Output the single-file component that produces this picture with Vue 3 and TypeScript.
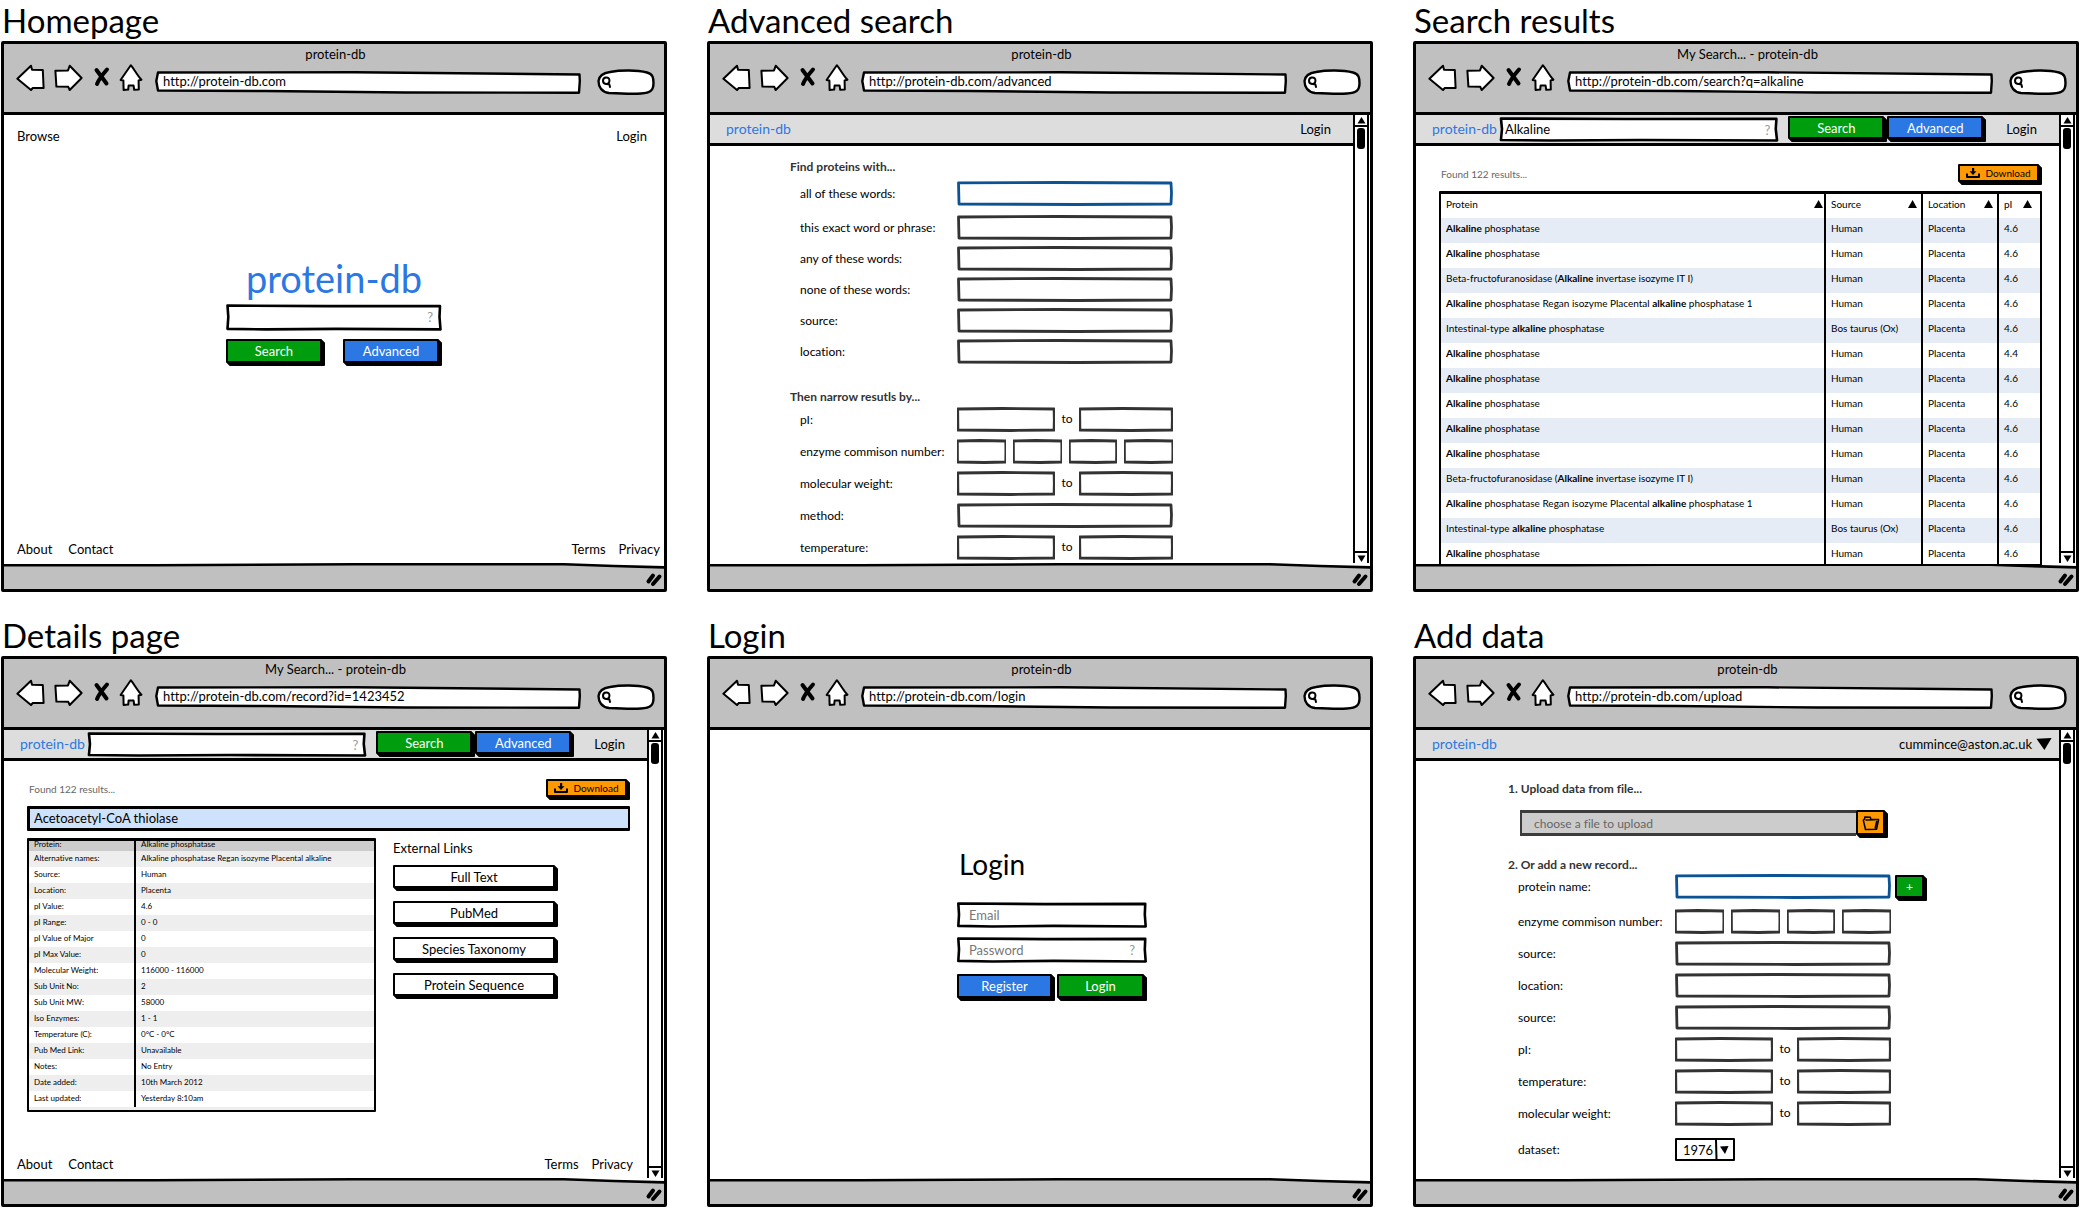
<script setup lang="ts">
type Kind = 'home' | 'advanced' | 'results' | 'details' | 'login' | 'upload'
type FieldKind = 'full' | 'range' | 'quad' | 'select'

interface Screen {
  kind: Kind
  heading: string
  title: string
  url: string
}

interface Field {
  label: string
  kind: FieldKind
  focus?: boolean
  add?: boolean
}

interface TextPart {
  text: string
  bold?: boolean
}

interface Result {
  name: TextPart[]
  source: string
  pi: string
}

const screens: Screen[] = [
  { kind: 'home', heading: 'Homepage', title: 'protein-db', url: 'http://protein-db.com' },
  { kind: 'advanced', heading: 'Advanced search', title: 'protein-db', url: 'http://protein-db.com/advanced' },
  { kind: 'results', heading: 'Search results', title: 'My Search... - protein-db', url: 'http://protein-db.com/search?q=alkaline' },
  { kind: 'details', heading: 'Details page', title: 'My Search... - protein-db', url: 'http://protein-db.com/record?id=1423452' },
  { kind: 'login', heading: 'Login', title: 'protein-db', url: 'http://protein-db.com/login' },
  { kind: 'upload', heading: 'Add data', title: 'protein-db', url: 'http://protein-db.com/upload' },
]

const full = (label: string, extra: Partial<Field> = {}): Field => ({ label, kind: 'full', ...extra })
const range = (label: string): Field => ({ label, kind: 'range' })

const wordFields: Field[] = [
  full('all of these words:', { focus: true }),
  full('this exact word or phrase:'),
  full('any of these words:'),
  full('none of these words:'),
  full('source:'),
  full('location:'),
]

const narrowFields: Field[] = [
  range('pI:'),
  { label: 'enzyme commison number:', kind: 'quad' },
  range('molecular weight:'),
  full('method:'),
  range('temperature:'),
]

const recordFields: Field[] = [
  full('protein name:', { focus: true, add: true }),
  { label: 'enzyme commison number:', kind: 'quad' },
  full('source:'),
  full('location:'),
  full('source:'),
  range('pI:'),
  range('temperature:'),
  range('molecular weight:'),
  { label: 'dataset:', kind: 'select' },
]

const groups: Record<'advanced' | 'upload', { id: string; title: string; fields: Field[] }[]> = {
  advanced: [
    { id: 'words', title: 'Find proteins with...', fields: wordFields },
    { id: 'narrow', title: 'Then narrow resutls by...', fields: narrowFields },
  ],
  upload: [{ id: 'new-record', title: '2. Or add a new record...', fields: recordFields }],
}

const plain: TextPart[] = [{ text: 'Alkaline', bold: true }, { text: ' phosphatase' }]
const beta: TextPart[] = [
  { text: 'Beta-fructofuranosidase (' },
  { text: 'Alkaline', bold: true },
  { text: ' invertase isozyme IT I)' },
]
const regan: TextPart[] = [
  { text: 'Alkaline', bold: true },
  { text: ' phosphatase Regan isozyme Placental ' },
  { text: 'alkaline', bold: true },
  { text: ' phosphatase 1' },
]
const intestinal: TextPart[] = [
  { text: 'Intestinal-type ' },
  { text: 'alkaline', bold: true },
  { text: ' phosphatase' },
]
const human = (name: TextPart[], pi = '4.6'): Result => ({ name, source: 'Human', pi })
const ox: Result = { name: intestinal, source: 'Bos taurus (Ox)', pi: '4.6' }

const results: Result[] = [
  human(plain), human(plain), human(beta), human(regan), ox,
  human(plain, '4.4'), human(plain), human(plain), human(plain), human(plain),
  human(beta), human(regan), ox, human(plain),
]

const columns = ['Protein', 'Source', 'Location', 'pI']

const record: [string, string][] = [
  ['Protein:', 'Alkaline phosphatase'],
  ['Alternative names:', 'Alkaline phosphatase Regan isozyme Placental alkaline'],
  ['Source:', 'Human'],
  ['Location:', 'Placenta'],
  ['pI Value:', '4.6'],
  ['pI Range:', '0 - 0'],
  ['pI Value of Major', '0'],
  ['pI Max Value:', '0'],
  ['Molecular Weight:', '116000 - 116000'],
  ['Sub Unit No:', '2'],
  ['Sub Unit MW:', '58000'],
  ['Iso Enzymes:', '1 - 1'],
  ['Temperature (C):', '0°C - 0°C'],
  ['Pub Med Link:', 'Unavailable'],
  ['Notes:', 'No Entry'],
  ['Date added:', '10th March 2012'],
  ['Last updated:', 'Yesterday 8:10am'],
]

const externalLinks = ['Full Text', 'PubMed', 'Species Taxonomy', 'Protein Sequence']

const hasBar = (k: Kind) => k !== 'home' && k !== 'login'
const hasSearch = (k: Kind) => k === 'results' || k === 'details'
const formGroups = (k: Kind) => (k === 'advanced' || k === 'upload' ? groups[k] : [])
</script>

<template>
  <main class="board">
    <section v-for="s in screens" :key="s.kind" class="screen">
      <h2 class="heading">{{ s.heading }}</h2>
      <div class="window">
        <header class="chrome">
          <div class="chrome-title">{{ s.title }}</div>
          <div class="chrome-row">
            <div class="chrome-icons">
              <button type="button" class="tool" aria-label="Back">
                <svg width="29" height="27" viewBox="0 0 29 27"><path class="pen" d="M1.4 14.7 15 1.8 16 5.8 26.8 6 27.6 24 16.8 24 15 26Z" /></svg>
              </button>
              <button type="button" class="tool" aria-label="Forward">
                <svg width="29" height="27" viewBox="0 0 29 27"><path class="pen" d="M1.4 6.8 14 6.4 15.7 1.8 27.6 14 15.7 26 14.3 22.8 2.4 22.6Z" /></svg>
              </button>
              <button type="button" class="tool" aria-label="Stop">
                <svg width="18" height="27" viewBox="0 0 18 27"><path class="brush" d="M4.5 6 14.500 19.500M15 5.500C11 10 7 15 5 20" /></svg>
              </button>
              <button type="button" class="tool" aria-label="Home">
                <svg width="24" height="27" viewBox="0 0 24 27"><path class="pen" d="M11.8 1.2C15 5 18 11 22.4 15.8L19.6 16.4 19.8 25.6 15.2 25.8 14.6 21.6 9.6 21.6 9.2 25.6 4.6 26 4.4 16.6 1.6 16Z" /></svg>
              </button>
            </div>
            <input class="address" type="text" aria-label="Address" :value="s.url" />
            <div class="finder">
              <svg width="12" height="12" viewBox="0 0 12 12" aria-hidden="true"><path class="lens" d="M5 1.500C7.600 1.400 8.600 3 8.400 5 8.200 7 7 8.200 5 8 3 7.800 2 6.500 2 4.800 2 3 3 1.600 5 1.500ZM6 8 8.400 8.400 9 11" /></svg>
              <input type="search" aria-label="Find" />
            </div>
          </div>
        </header>

        <div class="viewport">
          <div class="page">
            <nav v-if="hasBar(s.kind)" class="bar">
              <a class="brand" href="#">protein-db</a>
              <form v-if="hasSearch(s.kind)" class="bar-search" @submit.prevent>
                <div class="hinted">
                  <input class="box dark" type="text" aria-label="Search proteins" :value="s.kind === 'results' ? 'Alkaline' : ''" />
                  <span class="hint">?</span>
                </div>
                <div class="bar-buttons">
                  <button class="btn green" type="submit">Search</button>
                  <button class="btn blue" type="button">Advanced</button>
                </div>
              </form>
              <button v-if="s.kind === 'upload'" class="account" type="button">
                cummince@aston.ac.uk
                <svg width="16" height="12" viewBox="0 0 16 12" aria-hidden="true"><path d="M.5 .8 15.600 0 8.400 12Z" /></svg>
              </button>
              <a v-else class="bar-login" href="#">Login</a>
            </nav>

            <div v-if="s.kind === 'home'" class="home">
              <nav class="links top"><a href="#">Browse</a><a href="#">Login</a></nav>
              <form class="home-search" @submit.prevent>
                <h1 class="logo">protein-db</h1>
                <div class="hinted">
                  <input class="box dark" type="text" aria-label="Search proteins" />
                  <span class="hint">?</span>
                </div>
                <div class="home-buttons">
                  <button class="btn green" type="submit">Search</button>
                  <button class="btn blue" type="button">Advanced</button>
                </div>
              </form>
            </div>

            <form v-if="s.kind === 'login'" class="login" @submit.prevent>
              <h1>Login</h1>
              <input class="box dark" type="email" placeholder="Email" aria-label="Email" />
              <div class="hinted">
                <input class="box dark" type="password" placeholder="Password" aria-label="Password" />
                <span class="hint">?</span>
              </div>
              <div class="login-buttons">
                <button class="btn blue" type="button">Register</button>
                <button class="btn green" type="submit">Login</button>
              </div>
            </form>

            <form v-if="formGroups(s.kind).length" class="entry" :class="`entry-${s.kind}`" @submit.prevent>
              <template v-if="s.kind === 'upload'">
                <h3>1. Upload data from file...</h3>
                <div class="file">
                  <input type="text" placeholder="choose a file to upload" aria-label="File to upload" />
                  <button class="btn orange" type="button" aria-label="Browse files">
                    <svg width="18" height="16" viewBox="0 0 18 16" aria-hidden="true"><path class="folder" d="M3.500 14.500 1.300 5 2.500 4.200 2.800 2 8.400 2.300 8.800 4.300 16.600 4.600 14.600 14.200ZM4 5 12.500 4.800M14.600 6.500 13.200 13" /></svg>
                  </button>
                </div>
              </template>
              <fieldset v-for="g in formGroups(s.kind)" :key="g.id" :class="g.id">
                <legend>{{ g.title }}</legend>
                <div v-for="(f, i) in g.fields" :key="i" class="field" :class="{ focus: f.focus, choice: f.kind === 'select' }">
                  <label :for="`${s.kind}-${g.id}-${i}`">{{ f.label }}</label>
                  <input v-if="f.kind === 'full'" :id="`${s.kind}-${g.id}-${i}`" class="box wide" :class="{ active: f.focus }" type="text" />
                  <div v-else-if="f.kind === 'range'" class="wide pair">
                    <input :id="`${s.kind}-${g.id}-${i}`" class="box" type="text" />
                    <span>to</span>
                    <input class="box" type="text" :aria-label="`${f.label} upper limit`" />
                  </div>
                  <div v-else-if="f.kind === 'quad'" class="wide four">
                    <input :id="`${s.kind}-${g.id}-${i}`" class="box" type="text" />
                    <input v-for="n in 3" :key="n" class="box" type="text" :aria-label="`${f.label} part ${n + 1}`" />
                  </div>
                  <select v-else :id="`${s.kind}-${g.id}-${i}`" class="dataset"><option>1976</option></select>
                  <button v-if="f.add" class="btn green plus" type="button" aria-label="Add name">+</button>
                </div>
              </fieldset>
            </form>

            <div v-if="hasSearch(s.kind)" class="content">
              <div class="toolbar">
                <span class="count">Found 122 results...</span>
                <button class="btn orange download" type="button">
                  <svg width="14" height="10" viewBox="0 0 14 10" aria-hidden="true"><path class="ink" d="M1 5.500V9H13V5.500" /><path d="M6 0H8.200V3.200H10.500L7 7 3.600 3.200H6Z" /></svg>
                  Download
                </button>
              </div>

              <div v-if="s.kind === 'results'" class="frame results-frame">
                <table class="results">
                  <colgroup><col /><col class="c-source" /><col class="c-location" /><col class="c-pi" /></colgroup>
                  <thead>
                    <tr>
                      <th v-for="c in columns" :key="c" scope="col">
                        <div class="sort">{{ c }}<svg width="9" height="8" viewBox="0 0 9 8" aria-hidden="true"><path d="M4.600 0 9 8H0Z" /></svg></div>
                      </th>
                    </tr>
                  </thead>
                  <tbody>
                    <tr v-for="(r, i) in results" :key="i">
                      <td><template v-for="(p, j) in r.name" :key="j"><b v-if="p.bold">{{ p.text }}</b><template v-else>{{ p.text }}</template></template></td>
                      <td>{{ r.source }}</td>
                      <td>Placenta</td>
                      <td>{{ r.pi }}</td>
                    </tr>
                  </tbody>
                </table>
              </div>

              <template v-else>
                <h1 class="record-name">Acetoacetyl-CoA thiolase</h1>
                <div class="record">
                  <div class="frame record-frame">
                    <table class="facts">
                      <colgroup><col class="c-key" /><col /></colgroup>
                      <tbody>
                        <tr v-for="[k, v] in record" :key="k"><th scope="row">{{ k }}</th><td>{{ v }}</td></tr>
                      </tbody>
                    </table>
                  </div>
                  <aside class="external">
                    <h3>External Links</h3>
                    <button v-for="l in externalLinks" :key="l" class="btn white" type="button">{{ l }}</button>
                  </aside>
                </div>
              </template>
            </div>

            <footer v-if="s.kind === 'home' || s.kind === 'details'" class="links bottom" :class="{ inset: s.kind === 'details' }">
              <a href="#">About</a><a class="contact" href="#">Contact</a><a class="terms" href="#">Terms</a><a href="#">Privacy</a>
            </footer>
          </div>

          <div v-if="hasBar(s.kind)" class="scroll" aria-hidden="true">
            <div class="cap up"><svg width="9" height="7" viewBox="0 0 9 7"><path d="M4.500 0 8.500 6.500H.500Z" /></svg></div>
            <div class="thumb"></div>
            <div class="cap down"><svg width="9" height="7" viewBox="0 0 9 7"><path d="M.500 .500H8.500L4.500 7Z" /></svg></div>
          </div>
        </div>

        <div class="status">
          <svg width="18" height="16" viewBox="0 0 18 16" aria-hidden="true"><path class="brush" d="M3.500 10.500 8 4.500M8 13 14.500 5.500" /></svg>
        </div>
      </div>
    </section>
  </main>
</template>

<style>
body { margin: 0; background: #fff; }
</style>

<style scoped>
* { box-sizing: border-box; }
.board {
  display: grid;
  grid-template-columns: repeat(3, 1fr);
  gap: 23px 40px;
  padding: 0 2px 0 1px;
  font-family: Lato, "Liberation Sans", sans-serif;
  font-size: 13px;
  font-variant-ligatures: none;
  line-height: 20px;
  color: #000;
}
h1, h2, h3 { margin: 0; font-weight: 400; }
a { color: inherit; text-decoration: none; }
button, input, select { margin: 0; font: inherit; color: inherit; }
input { outline: none; }
svg { display: block; flex: none; }
.pen { fill: #fff; stroke: #000; stroke-width: 2; stroke-linejoin: round; }
.brush { fill: none; stroke: #000; stroke-width: 4; stroke-linecap: round; }
.ink { fill: none; stroke: #000; stroke-width: 2; stroke-linejoin: round; }
.folder { fill: none; stroke: #000; stroke-width: 1.500; stroke-linejoin: round; stroke-linecap: round; }
.lens { fill: none; stroke: #000; stroke-width: 2; stroke-linecap: round; stroke-linejoin: round; }

.heading { height: 41px; padding-left: 1px; font-size: 33px; line-height: 40px; }
.window {
  display: flex;
  flex-direction: column;
  min-height: 551px;
  border: 3px solid #000;
  border-radius: 2px;
  background: #fff;
}

/* browser chrome */
.chrome { padding: 1px 9px 0 12px; height: 71px; background: #c0c0c0; border-bottom: 3px solid #000; }
.chrome-title { text-align: center; line-height: 19px; }
.chrome-row { display: flex; align-items: center; height: 36px; }
.chrome-icons { display: flex; gap: 9px; padding-bottom: 9px; }
.tool { padding: 0; border: 0; background: none; }
.address {
  flex: 1;
  min-width: 0;
  height: 23px;
  margin: 0 16px 0 12px;
  padding: 0 8px 2px;
  border: 0;
  background: url("data:image/svg+xml,%3Csvg xmlns='http://www.w3.org/2000/svg' viewBox='0 0 426 23' preserveAspectRatio='none'%3E%3Cpath d='M3 1.500 1.300 10 3 19.500 110 20 250 21.500 424 21.700 424.800 10 424.500 3.500 200 1.300Z' fill='%23fff' stroke='%23000' stroke-width='2.400' stroke-linejoin='round'/%3E%3C/svg%3E") 0 0 / 100% 100% no-repeat;
}
.finder {
  display: flex;
  align-items: center;
  width: 58px;
  height: 26px;
  padding: 0 8px 0 4px;
  background: url("data:image/svg+xml,%3Csvg xmlns='http://www.w3.org/2000/svg' viewBox='0 0 58 26'%3E%3Cpath d='M13 3C24 1 40 1 50 3.500 56 5 56.500 9 56.500 14 56.500 21 54 24 44 24.500 35 25 22 24.500 12 24 5 23 1.500 18 1.500 12 2 7 6 4 13 3Z' fill='%23fff' stroke='%23000' stroke-width='2.400'/%3E%3C/svg%3E") no-repeat;
}
.finder input { flex: 1; min-width: 0; height: 16px; padding: 0; border: 0; background: none; appearance: none; }

.viewport { display: flex; flex: 1; }
.page { display: flex; flex-direction: column; flex: 1; min-width: 0; }

.status {
  display: flex;
  justify-content: flex-end;
  align-items: flex-end;
  height: 26px;
  padding: 0 1px 2px;
  background: url("data:image/svg+xml,%3Csvg xmlns='http://www.w3.org/2000/svg' viewBox='0 0 660 26' preserveAspectRatio='none'%3E%3Cpath d='M-4 2.200 150 2.200 350 1.300 560 1.300 610 3 664 4.500V30H-4Z' fill='%23c0c0c0' stroke='%23000' stroke-width='2.600'/%3E%3C/svg%3E") 0 0 / 100% 100% no-repeat;
}

.scroll {
  display: flex;
  flex-direction: column;
  align-items: center;
  width: 16px;
  margin-right: 1px;
  border-left: 2px solid #000;
  border-right: 2px solid #000;
}
.cap { display: flex; align-items: center; justify-content: center; width: 12px; height: 12px; border: 0 solid #000; }
.cap.up { border-bottom-width: 2px; }
.cap.down { border-top-width: 2px; margin-top: auto; }
.thumb { width: 8px; height: 21px; margin-top: 1px; border-radius: 3px; background: #000; }

/* boxes and buttons */
.box {
  height: 25px;
  min-width: 0;
  padding: 0 6px;
  border: 0;
  background: url("data:image/svg+xml,%3Csvg xmlns='http://www.w3.org/2000/svg' viewBox='0 0 216 25' preserveAspectRatio='none'%3E%3Cpath vector-effect='non-scaling-stroke' d='M1.500 2 100 1.500 214 2 214.500 12 214 23 120 23.500 2 23Z' fill='%23fff' stroke='%23333' stroke-width='2.800' stroke-linejoin='round'/%3E%3C/svg%3E") 0 0 / 100% 100% no-repeat;
}
.box.active {
  background-image: url("data:image/svg+xml,%3Csvg xmlns='http://www.w3.org/2000/svg' viewBox='0 0 216 25' preserveAspectRatio='none'%3E%3Cpath vector-effect='non-scaling-stroke' d='M1.500 1.800 100 1.500 214 2 214.500 12 214 23 120 23.500 2 23Z' fill='%23fff' stroke='%230b5394' stroke-width='2.800' stroke-linejoin='round'/%3E%3C/svg%3E");
}
.box.dark {
  width: 100%;
  background-image: url("data:image/svg+xml,%3Csvg xmlns='http://www.w3.org/2000/svg' viewBox='0 0 216 25' preserveAspectRatio='none'%3E%3Cpath vector-effect='non-scaling-stroke' d='M1.500 1.500 100 2 214 1.800 213.500 12 214.500 23.500 110 23 40 23.500 1.500 23 2.300 12Z' fill='%23fff' stroke='%23000' stroke-width='2.600' stroke-linejoin='round'/%3E%3C/svg%3E");
}
.hinted { position: relative; display: flex; }
.hint { position: absolute; top: 3px; right: 9px; color: #999; }
.btn {
  display: flex;
  align-items: center;
  justify-content: center;
  height: 23px;
  margin: 0 3px 3px 0;
  padding: 0;
  border: 2px solid #000;
  border-radius: 1px;
  box-shadow: 1px 1px 0 #000, 2px 2px 0 #000, 3px 3px 0 #000;
  color: #fff;
}
.green { background: #009e0f; }
.blue { background: #2b78e4; }
.orange { background: #ff9900; color: #000; }
.white { background: #fff; color: #000; }

/* navigation bar */
.bar {
  display: flex;
  align-items: center;
  height: 31px;
  padding: 0 22px 0 16px;
  background: #ddd;
  border-bottom: 3px solid #000;
}
.brand { font-size: 14px; color: #2b78e4; }
.bar-search { display: flex; flex: 1; gap: 9px; margin-left: 2px; align-items: center; }
.bar-search .hinted { flex: 1; }
.bar-buttons { display: flex; }
.bar-buttons .btn { width: 96px; }
.bar-login { margin-left: auto; }
.bar-search + .bar-login { margin-left: 20px; }
.account { display: flex; align-items: center; gap: 4px; margin: 0 -15px 0 auto; padding: 0; border: 0; background: none; }

/* home */
.home { display: flex; flex-direction: column; }
.links { display: flex; }
.links.top { justify-content: space-between; padding: 11px 17px 0 13px; }
.links.bottom { margin-top: auto; padding: 0 4px 4px 13px; }
.links.bottom.inset { padding: 0 14px 4px 13px; }
.contact { margin-left: 16px; }
.terms { margin: 0 13px 0 auto; }
.home-search { width: 216px; margin: 109px auto 0; }
.logo { margin-bottom: 3px; font-size: 38px; line-height: 46px; text-align: center; color: #2b78e4; }
.home-search .box { height: 27px; }
.home-buttons { display: flex; justify-content: space-between; margin-top: 8px; }
.home-buttons .btn { width: 96px; height: 24px; }

/* login */
.login { display: flex; flex-direction: column; gap: 9px; width: 437px; padding: 117px 0 0 247px; }
.login h1 { margin-bottom: 12px; padding-left: 2px; font-size: 28px; line-height: 34px; }
.login .box { height: 26px; padding: 0 12px; }
.login .hint { right: 12px; }
.login ::placeholder { color: #777; opacity: 1; }
.login-buttons { display: flex; gap: 2px; margin-top: 2px; }
.login-buttons .btn { flex: 1; height: 24px; }
.login-buttons .blue { flex: 0 0 95px; }

/* entry forms */
.entry { font-size: 12px; }
.entry-advanced { padding: 12px 0 0 80px; }
.entry-upload { padding: 19px 0 0 92px; }
.entry h3, legend { padding: 0; font-size: 12px; line-height: 18px; font-weight: 700; color: #333; }
fieldset { display: flex; flex-direction: column; gap: 7px; margin: 0; padding: 0; border: 0; }
fieldset.words { gap: 6px; padding-top: 5px; }
fieldset.narrow { margin-top: 24px; padding-top: 1px; }
.field { display: flex; align-items: center; height: 25px; padding-left: 10px; }
.field.focus { margin-bottom: 3px; }
.field.choice { margin-top: 4px; }
.field label { width: 157px; }
.wide { width: 216px; }
.pair { display: grid; grid-template-columns: 98px 24px 1fr; text-align: center; }
.pair span { line-height: 24px; }
.four { display: grid; grid-template-columns: repeat(4, 1fr); gap: 7px; }
.plus { width: 29px; margin: 0 0 0 4px; }
.dataset {
  width: 60px;
  height: 23px;
  padding: 0 0 0 6px;
  border: 2px solid #000;
  border-radius: 1px;
  appearance: none;
  font-size: 13px;
  background: #fff url("data:image/svg+xml,%3Csvg xmlns='http://www.w3.org/2000/svg' width='18' height='19' viewBox='0 0 18 19'%3E%3Cpath d='M1 0 1.500 19' stroke='%23000' stroke-width='2'/%3E%3Cpath d='M5 6.500 13.500 6 10 14Z'/%3E%3C/svg%3E") right 0 / 18px 19px no-repeat;
}
.file { display: flex; margin: 12px 0 20px 12px; }
.file input {
  width: 336px;
  height: 26px;
  padding: 0 12px;
  border: 3px solid #3c3c3c;
  border-width: 3px 0 3px 2px;
  background: #ccc;
}
.file ::placeholder { color: #666; opacity: 1; }
.file .btn { width: 29px; height: 25px; margin: 0; }

/* results and record */
.content { padding: 18px 17px 0 23px; }
.toolbar { display: flex; justify-content: space-between; align-items: flex-start; height: 27px; padding-left: 2px; font-size: 10px; color: #666; }
.download { gap: 5px; width: 81px; height: 18px; font-size: 10px; }
.frame { border: 2px solid #000; border-top-width: 3px; border-radius: 1px; overflow: hidden; }
table { width: 100%; border-collapse: collapse; table-layout: fixed; }
th, td { text-align: left; font-weight: 400; white-space: nowrap; overflow: hidden; }
/* the results run on under the status bar's top edge */
.results-frame { position: relative; height: 375px; margin-bottom: -3px; background: #fff; }
.results { font-size: 10px; }
.results th, .results td { height: 25px; padding: 0 4px 5px 5px; line-height: 16px; }
.results th { height: 24px; }
.results th:first-child { padding-right: 1px; }
.results th:last-child { padding-right: 8px; }
.results th + th, .results td + td { border-left: 2px solid #000; }
.results tbody tr:nth-child(odd) { background: #e5ecf6; }
.c-source { width: 97px; }
.c-location { width: 76px; }
.c-pi { width: 42px; }
.sort { display: flex; justify-content: space-between; align-items: center; }

.record-name {
  height: 25px;
  padding-left: 4px;
  border: 3px solid #000;
  border-right-width: 2px;
  border-radius: 1px;
  background: #cfe2fb;
  font-size: 13px;
  line-height: 18px;
}
.record { display: flex; gap: 17px; margin-top: 7px; }
.record-frame { flex: 0 1 349px; height: 274px; background: #eee; }
.facts { font-size: 8px; }
.facts th, .facts td { height: 16px; padding: 0 4px 2px 5px; line-height: 14px; }
.facts td { border-left: 2px solid #000; }
.facts tr { background: #fff; }
.facts tr:nth-child(even) { background: #eee; }
.facts tr:first-child { background: #ccc; }
.facts tr:first-child > * { height: 10px; padding-bottom: 4px; line-height: 6px; overflow: visible; }
.c-key { width: 106px; }
.external { display: flex; flex-direction: column; gap: 10px; width: 165px; }
.external h3 { margin-bottom: -3px; font-size: 13px; }
.external .btn { margin-bottom: 3px; }
</style>
